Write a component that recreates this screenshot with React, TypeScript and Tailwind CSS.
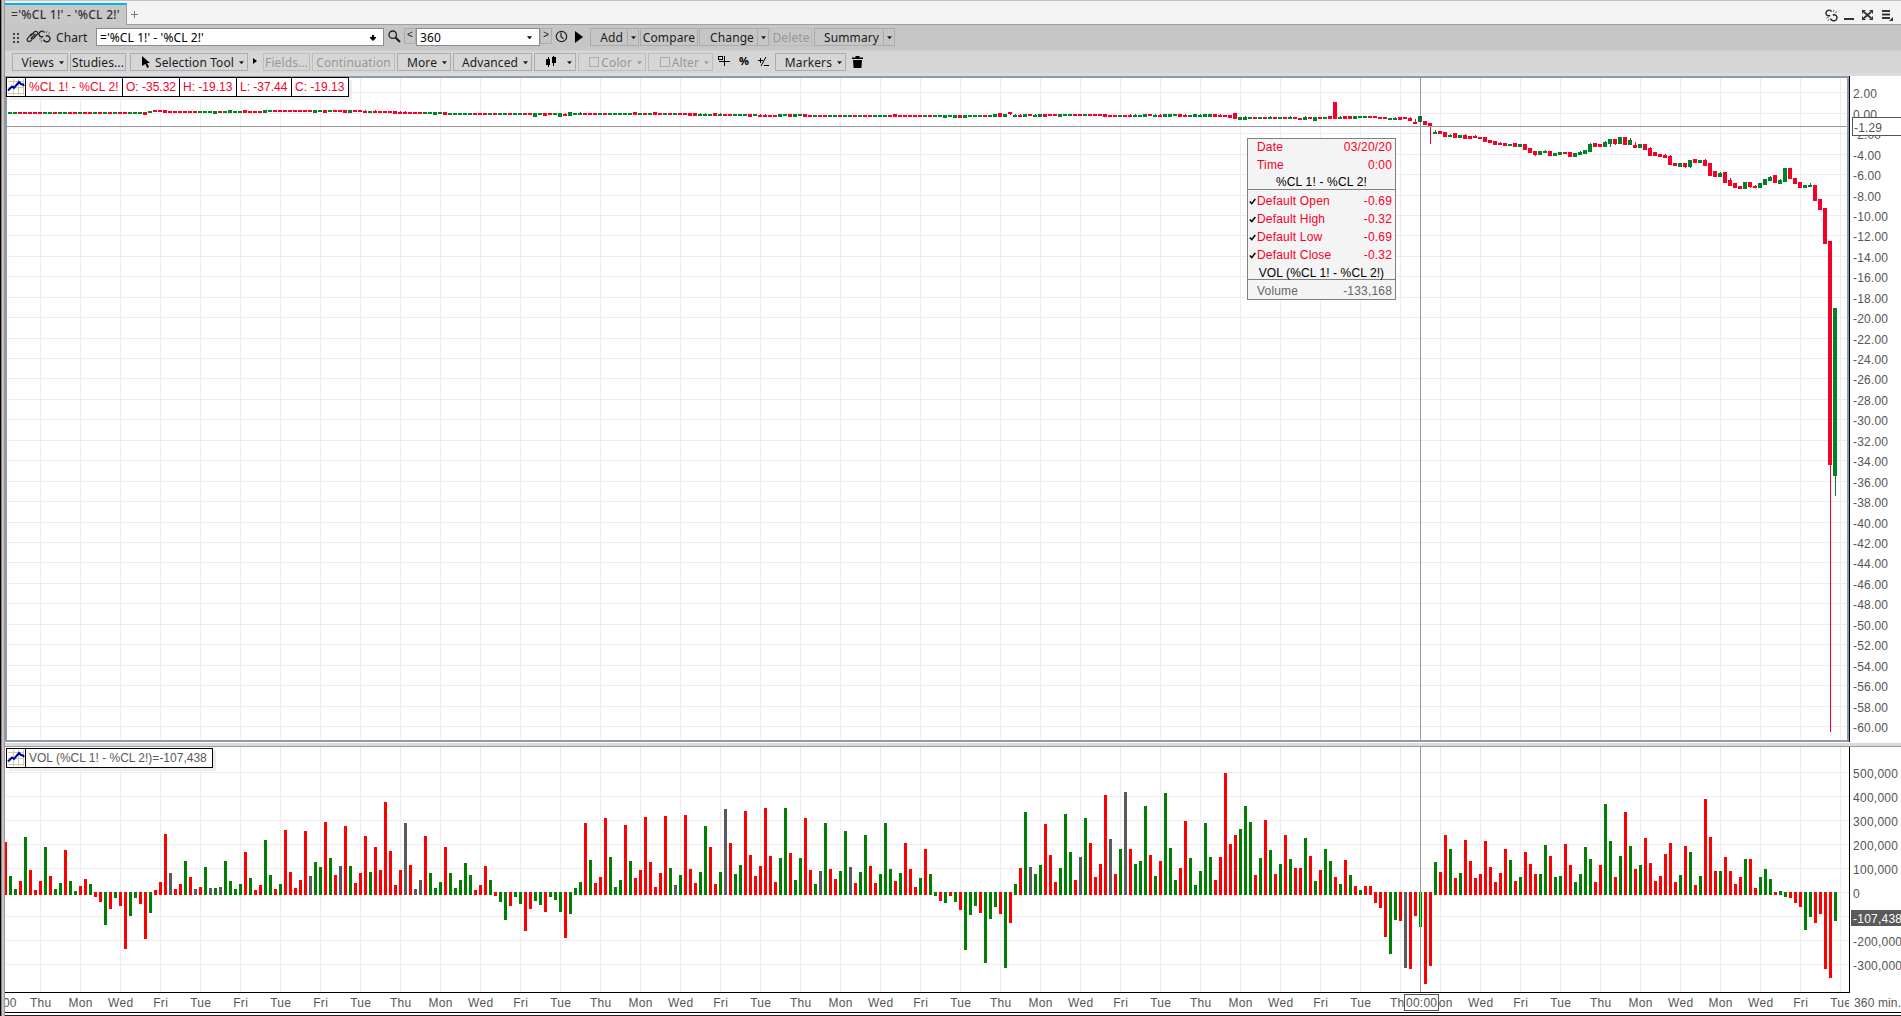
import React from "react";

type Tone = "R" | "G" | "K";

/* Volume histogram: tone + bar end, in thirds of a pixel from the panel origin. */
const VOLUME = `
R336 G438 G477 R453 G321 R420 R480 R453 G351 R438 G477 G459 R360 G453 G483 R468 R447 G462 R501 R516
G585 R537 G504 R528 R657 G558 G504 R522 R627 G549 R480 R456 R312 K429 R477 R462 G393 R441 K477 R471
G411 K474 G474 K471 G393 G453 G477 G462 R366 G444 R480 R465 G330 G435 R477 G462 R300 R426 R474 R450
R303 K438 G396 G411 R276 G384 R435 K408 R288 G408 R459 R429 R318 G426 R351 R420 R216 R363 R465 R420
K279 R405 K477 K450 R318 G429 G474 G456 R351 G429 G474 G450 G399 G435 R480 R465 R408 G450 R498 G516
G570 R528 G501 G522 R603 R537 G513 G525 R546 G501 G510 G546 R624 G552 G474 G456 R279 G390 R459 R441
R264 G381 G471 G450 R285 G393 R444 R420 R261 R396 R471 R429 R258 G414 K465 G435 R255 R417 R459 G426
G288 R351 R462 G426 K237 R339 G432 G405 R243 R375 R438 R408 R234 R378 R456 G384 G234 R369 G450 G384
R264 R420 G462 K423 G279 R417 R447 G423 G303 K411 R459 G426 G315 R408 R459 G432 G279 G417 R453 G429
R339 R417 R471 G444 R357 G432 G498 R513 G519 R498 G516 R540 G660 G555 G528 R549 G699 G567 G531 R552
G714 R579 G462 R414 G246 K411 G432 G405 R282 R375 R456 G414 G252 G366 R450 K381 G264 R339 R441 R402
R195 K327 R432 G357 K186 R357 G402 G393 G228 R375 G438 R393 G189 G354 G450 R414 R273 G384 G465 G423
G279 G381 R450 R381 R129 R342 R315 G297 G228 G276 R435 G384 R270 G360 R432 G402 R315 G387 R414 R414
G324 R378 G453 R420 G357 G393 R441 G462 R390 G435 R468 G480 R468 R468 R519 R534 R621 G672 G570 R573
K714 R717 R558 G591 R762 R708 G396 R426 R315 G357 R444 G429 R330 R393 R444 R432 R333 R411 R456 R429
R357 G390 R453 G441 R366 R402 R432 G432 G345 R378 G441 G438 R342 R405 G456 G432 G351 G387 R456 R405
G222 G333 R441 G378 R246 G348 R417 G405 R324 R399 R453 R438 R372 R339 R456 G435 R348 G366 R465 G438
R207 R321 R423 G423 R381 R423 R462 R441 G387 R387 R474 G441 G417 G447 R486 G483 G501 R504 R519 R531
G600 G561 R579 R552 R717 R744 G573`
  .trim()
  .split(/\s+/)
  .map((t) => ({ tone: t[0] as Tone, end: Number(t.slice(1)) / 3 }));

/* Quiet sessions: first index, body top (thirds of a pixel), tones. Every body is two pixels tall. */
const QUIET: [number, number, string][] = [
  [1, 66, "GGRRRRRGGRGGRRGRRGRGRGRRGGGR"],
  [29, 63, "G"],
  [30, 60, "RRR"],
  [33, 63, "RRRRRRGGGGRGGGGRRRRG"],
  [53, 60, "GRRRRRRRRGGRGRRRGRR"],
  [72, 63, "RGRRRRR"],
  [79, 66, "RRRRRGGGGR"],
  [89, 69, "GGGGGRRRGRGGRGGRRGGRRGG"],
  [112, 72, "R"],
  [113, 69, "GGGRRRGRGGGGGRGRGRRGRGRRRR"],
  [139, 72, "GGGRGRRGGGRG"],
  [151, 75, "RRRR"],
  [155, 72, "GGRGGR"],
  [161, 75, "RGRRGGRGGRGRRGGGRRRRRRRGRGGRGRGRGGGRGG"],
  [199, 72, "GRG"],
  [202, 66, "R"],
  [203, 75, "GRGRGGRRRGGGRRGRRRRRRGRRGGGRGRGGGRRGGGGGRRRRR"],
  [248, 81, "GGRGRGRGRGRRGRGRGGRGRR"],
  [270, 78, "GGRR"],
  [274, 81, "RRRGGRRR"],
];

type Candle = { tone: string; top: number; bottom: number; wick?: number };

/* Individual candles: index, tone, top, bottom, optional wick end. */
const DETAIL = `
28R66,75 32R60,69 42G63,72 45G60,69 48R60,69 52G60,69 62G60,69 64R60,69 68R60,69 69G60,69 72R63,69,60 74R63,69,60
78R63,72 79R66,72,63 80R66,72,63 86G66,75 88R66,75 106G69,81 108R69,78 111G69,81 112R72,78,69 113G66,78 115G69,75,66
126R66,75 130R66,75 137R69,78 138R69,78 139G72,78,69 140G72,78,69 142R69,78 143G72,78,69 149R72,81 151R75,81,72
152R75,81,72 155G72,81 157R72,81 158G72,81 160R72,81 178R72,81 188G75,84 190G75,84 191R75,84 192G75,84 198G72,81
199R69,81 200G72,81 201R66,72,75 202G75,81,72 203R75,81,72 204G72,81
205R72,78 206G75,81,72 207G72,81 208R72,81 209R72,78 210R72,78 211G72,81 212G72,78 213G72,78 214R72,78 215R72,78
216G72,78 217R72,78 218R72,78 219R72,78 220R72,81 221R75,81 222R75,81 223G75,81 224R75,81 225R75,81,72 226G75,81,72
227G75,81 228G72,81 229R72,78 230G75,81,72 231R75,81,72 232G72,81 233G72,81 234G72,78 235R72,81 236R75,81,72
237G75,81 238G72,81 239G75,81,72 240G72,81 241G72,81 242R72,81 243R75,81,72 244R75,81 245R75,84 246R69,87
247G81,90 248G81,90,78 253G81,87,78 257G81,87,78 259R84,90 260G81,90,78 262G81,93 265R78,87 266R36,87 267G81,87,78
268R78,87 269R78,87 270G78,87 271G78,84 272G78,84 273R78,84 274R78,84 275R81,87 276R81,87 277G84,90
278G84,90,81 279R81,90 280R81,87 281R84,93,81 282R96,102,87 283G78,96 284R93,105 285R99,110,162 286G126,132,120
287R123,132 288R126,141 289G135,141,132 290R129,144 291G135,144 292R135,147,132 293R138,147 294R138,144,135
295R141,147 296R141,156 297R150,159 298R153,165 299R159,165,156 300R159,168 301G162,168 302R159,171 303G162,171
304R162,180 305R174,189 306R183,195,198 307G183,195 308G183,189,180 309R183,198 310G189,198 311G186,195 312R186,192
313R186,201 314G189,201 315G186,195,183 316G180,192 317G162,186,159 318R159,171 319R162,171 320G156,171,153
321G147,162,171 322R147,162,165 323G141,162 324R141,165 325G150,165,144 326R165,174,156 327G162,174 328R162,180
329R174,198,171 330R186,198 331R192,201 332R195,204,192 333R198,225,195 334R219,228 335G219,231 336R219,231,234
337G210,231,234 338R207,219 339G210,219 340R210,228,207 341R219,258 342R243,261 343G249,261,246 344R246,279
345R270,288,264 346R279,294 347R288,297 348G276,297 349R276,291,294 350R288,294,285 351G279,294 352G267,285
353G261,273,258 354R255,279 355G270,282,267 356G234,276 357R234,267 358R264,282 359R276,294 360G285,294
361G285,291,279 362R285,333 363R327,360 364R354,462 365R453,1125,1926 366G654,1158,1218`;

const candles = new Map<number, Candle>();
QUIET.forEach(([start, top, tones]) =>
  tones.split("").forEach((tone, k) => candles.set(start + k, { tone, top, bottom: top + 6 }))
);
DETAIL.trim()
  .split(/\s+/)
  .forEach((t) => {
    const m = /^(\d+)([RG])([\d,]+)$/.exec(t)!;
    const [top, bottom, wick] = m[3].split(",").map(Number);
    candles.set(Number(m[1]), { tone: m[2], top, bottom, wick });
  });

const PRICE_GRID = [
  92, 113, 133, 154, 174, 195, 215, 235, 256, 276, 297, 317, 338, 358, 378, 399, 419, 440, 460, 481, 501, 522, 542,
  562, 583, 603, 624, 644, 665, 685, 706, 726,
];
const VOLUME_GRID = [772, 796, 820, 844, 868, 892, 916, 940, 964];
const VOLUME_LABELS = ["500,000", "400,000", "300,000", "200,000", "100,000", "0", "", "-200,000", "-300,000"];

/* Day names, one for each 40-pixel column. */
const DAY_COLUMNS =
  "Thu Mon Wed Fri Tue Fri Tue Fri Tue Thu Mon Wed Fri Tue Thu Mon Wed Fri Tue Thu Mon Wed Fri Tue Thu Mon Wed Fri Tue Thu Mon Wed Fri Tue Thu Mon Wed Fri Tue Thu Mon Wed Mon Wed Fri Tue".split(
    " "
  );

const FILL: Record<string, string> = { R: "#ff0000", G: "#008000", K: "#5a5a5a" };
const COLUMNS = Array.from({ length: 46 }, (_, k) => 40 * (k + 1));

function PriceChart() {
  return (
    <svg width="1840" height="662" viewBox="7 78 1840 662" shapeRendering="crispEdges" className="block">
      <rect x="7" y="78" width="1840" height="662" fill="#fff" />
      {COLUMNS.map((x) => (
        <rect key={x} x={x} y="78" width="1" height="662" fill="#ededed" />
      ))}
      {PRICE_GRID.map((y) => (
        <rect key={y} x="7" y={y} width="1840" height="1" fill="#ededed" />
      ))}
      {[...candles].map(([i, c]) => {
        const fill = c.tone === "R" ? "#f50028" : "#008228";
        const lo = c.wick === undefined ? c.top : Math.min(c.top, c.wick);
        const hi = c.wick === undefined ? c.bottom : Math.max(c.bottom, c.wick);
        return (
          <g key={i} fill={fill}>
            <rect x={3 + 5 * i} y={90 + c.top / 3} width="4" height={(c.bottom - c.top) / 3} />
            <rect x={5 + 5 * i} y={90 + lo / 3} width="1" height={(hi - lo) / 3} />
          </g>
        );
      })}
      <rect x="7" y="126" width="1840" height="1" fill="#999" />
      <rect x="1420" y="78" width="1" height="662" fill="#999" />
      <rect x="1420" y="116" width="1" height="6" fill="#5a2878" />
    </svg>
  );
}

function VolumeChart() {
  return (
    <svg width="1844" height="245" viewBox="5 747 1844 245" shapeRendering="crispEdges" className="block">
      {COLUMNS.map((x) => (
        <rect key={x} x={x} y="747" width="1" height="245" fill="#ededed" />
      ))}
      {VOLUME_GRID.map((y) => (
        <rect key={y} x="5" y={y} width="1844" height="1" fill="#ededed" />
      ))}
      <rect x="1420" y="747" width="1" height="245" fill="#999" />
      {VOLUME.map((v, i) => {
        const end = 730 + v.end;
        const up = end <= 892;
        return (
          <rect
            key={i}
            x={4 + 5 * i}
            y={up ? end : 892}
            width="3"
            height={up ? 895 - end : end - 892}
            fill={FILL[v.tone]}
          />
        );
      })}
      <rect x="1420" y="892" width="1" height="35" fill="#66e066" />
    </svg>
  );
}

const axisFont = "font-['Liberation_Sans',Arial,sans-serif] text-[12px]";

function PriceAxis() {
  return (
    <svg width="52" height="666" viewBox="1849 76 52 666" className={`block bg-white ${axisFont}`}>
      <rect x="1849" y="76" width="1" height="666" fill="#000" shapeRendering="crispEdges" />
      {PRICE_GRID.map((y, k) => {
        const label = (2 - 2 * k).toFixed(2);
        return (
          <text key={k} x="1853" y={y + 6} fill="#555" textLength={label.length * 7 - (label[0] === "-" ? 7 : 4)}>
            {label}
          </text>
        );
      })}
      <rect x="1852.5" y="117.5" width="60" height="18" fill="#fff" stroke="#555" />
      <text x="1854" y="132" fill="#555" textLength="28">-1.29</text>
    </svg>
  );
}

function VolumeAxis() {
  return (
    <svg width="52" height="246" viewBox="1849 747 52 246" className={`block bg-white ${axisFont}`}>
      <rect x="1849" y="747" width="1" height="246" fill="#000" shapeRendering="crispEdges" />
      {VOLUME_LABELS.map((t, k) => (
        <text key={k} x="1853" y={VOLUME_GRID[k] + 6} fill="#555" textLength={t.length > 7 ? 49 : t.length > 1 ? 45 : 7}>
          {t}
        </text>
      ))}
      <rect x="1851" y="910" width="50" height="16" fill="#5a5a5a" />
      <text x="1853" y="923" fill="#fff" textLength="49">-107,438</text>
    </svg>
  );
}

function TimeAxis() {
  return (
    <svg width="1896" height="19" viewBox="5 993 1896 19" className={`block bg-white ${axisFont}`}>
      <svg x="5" y="993" width="1844" height="19" viewBox="5 993 1844 19">
        <text x="3" y="1007" fill="#555">00</text>
        {DAY_COLUMNS.map((d, k) => (
          <text key={k} x={40 * (k + 1) + 0.7} y="1007" fill="#555" textAnchor="middle" letterSpacing="0.3">
            {d}
          </text>
        ))}
        <rect x="1404.5" y="994.5" width="34" height="16" fill="#fff" stroke="#555" />
        <text x="1406" y="1007" fill="#555" textLength="31">00:00</text>
      </svg>
      <text x="1854" y="1007" fill="#555" textLength="47">360 min.</text>
    </svg>
  );
}

function Caret({ small }: { small?: boolean }) {
  return (
    <svg width={small ? 5 : 6} height="4" viewBox="0 0 6 4" className="shrink-0">
      <path d="M0 0h6L3 3.6z" fill="currentColor" />
    </svg>
  );
}

function Btn({ className, children, dim }: { className: string; children?: React.ReactNode; dim?: boolean }) {
  return (
    <div
      className={`flex h-[18px] shrink-0 items-center overflow-hidden border pt-[2px] whitespace-nowrap ${
        dim ? "border-[#bdbdbd] text-[#989898]" : "border-[#acacac] text-[#1c1c1c]"
      } ${className}`}
    >
      {children}
    </div>
  );
}

function BrokenLink({ className }: { className: string }) {
  return (
    <svg width="13" height="13" viewBox="0 0 13 13" fill="none" stroke="#222" strokeWidth="1.4" className={className}>
      <path d="M6.500 2.600C5.600.800 3.400.600 2 2S.600 5 2 6.200c.8.700 2.200.6 3.200.1M5.500 9.600c.8 1.800 3.400 3 5.300 1.600 1.600-1.300 1.600-3.400.2-4.700-.9-.8-2.300-.9-3.300-.2" />
      <path d="M8.500 3.200L8.900.800M10 4.200l2.200-2M3.800 8.400L1.200 9M4 10l-1.200 2.200" strokeWidth=".9" stroke="#666" />
    </svg>
  );
}

function Legend({ cells, tone }: { cells: [string, string][]; tone: string }) {
  return (
    <div
      className={`flex h-5 w-fit border border-black bg-white font-['Liberation_Sans',Arial,sans-serif] text-[12px] leading-[18px] shadow-[3px_3px_0_#ededed] ${tone}`}
    >
      <svg width="18" height="18" viewBox="0 0 18 18" className="shrink-0">
        <path d="M1 3.5h16M1 9.5h16M1 15.5h16M6.500 1v16M11.500 1v16M16.500 1v16" stroke="#cdcdaa" fill="none" shapeRendering="crispEdges" />
        <path d="M1 12.500l4-4 2 1.500L12 4l2 2 2 .5 1 1.500" stroke="#0000aa" strokeWidth="2" fill="none" />
      </svg>
      {cells.map(([text, width]) => (
        <div key={text} className={`border-l border-black pl-[3px] whitespace-nowrap ${width}`}>
          {text}
        </div>
      ))}
    </div>
  );
}

function TipRow({ name, value, check }: { name: string; value: string; check?: boolean }) {
  return (
    <div className="flex h-[18px] items-center pr-[3px]">
      <div className="w-[9px] shrink-0">
        {check && (
          <svg width="7" height="7" viewBox="0 0 7 7" className="ml-px mt-px">
            <path d="M.8 3.4l2 2.200L6.300 1" stroke="#000" strokeWidth="1.500" fill="none" />
          </svg>
        )}
      </div>
      <span>{name}</span>
      <span className="ml-auto">{value}</span>
    </div>
  );
}

function Tooltip() {
  return (
    <div className="absolute left-[1240px] top-[60px] h-[162px] w-[149px] border border-[#808080] bg-[#f4f4f4] font-['Liberation_Sans',Arial,sans-serif] text-[12px] leading-[18px] tracking-[0.18px] text-[#f50028]">
      <div className="-mt-px">
        <TipRow name="Date" value="03/20/20" />
        <TipRow name="Time" value="0:00" />
      </div>
      <div className="h-[16px] border-b border-[#808080] text-center leading-[17px] text-black">%CL 1! - %CL 2!</div>
      <div className="h-[2px]" />
      <TipRow check name="Default Open" value="-0.69" />
      <TipRow check name="Default High" value="-0.32" />
      <TipRow check name="Default Low" value="-0.69" />
      <TipRow check name="Default Close" value="-0.32" />
      <div className="h-[16px] border-b border-[#808080] text-center leading-[18px] tracking-[0.1px] text-black">
        VOL (%CL 1! - %CL 2!)
      </div>
      <div className="h-[2px]" />
      <div className="text-[#666]">
        <TipRow name="Volume" value="-133,168" />
      </div>
    </div>
  );
}

function TabBar() {
  return (
    <div className="flex h-[25px] border-t border-[#c4c4c4] bg-[#f3f3f3]">
      <div className="mt-[2px] flex h-[22px] w-[122px] shrink-0 border-t-2 border-r border-t-[#00b4e6] border-r-[#a0a0a0] bg-[#c8c8c8] pl-[6px] text-[12px] leading-[19px] font-medium tracking-[0.28px] text-[#333]">
        ='%CL 1!' - '%CL 2!'
      </div>
      <div className="flex grow items-center border-b border-[#a0a0a0]">
        <svg width="7" height="7" viewBox="0 0 7 7" className="ml-1 mt-[3px]">
          <path d="M3.500 0v7M0 3.500h7" stroke="#777" />
        </svg>
        <BrokenLink className="mt-[5px] ml-auto" />
        <div className="mt-[13px] ml-[6px] h-[2px] w-[10px] bg-[#333]" />
        <svg width="11" height="10" viewBox="0 0 11 10" className="mt-[5px] ml-[8px]" stroke="#333" fill="#333">
          <path d="M2 2l7 6M9 2L2 8" strokeWidth="1.800" />
          <path d="M0 0h4L0 4zM11 0v4L7 0zM0 10V6l4 4zM11 10H7l4-4z" stroke="none" />
        </svg>
        <svg width="11" height="11" viewBox="0 0 11 11" className="mt-[6px] mr-[8px] ml-[9px]" fill="#333">
          <path d="M0 0h8v2H0zM0 3.500h8v2H0zM0 7h8v2H0zM11 7v4H7z" />
        </svg>
      </div>
    </div>
  );
}

function MainToolbar() {
  return (
    <div className="flex h-[25px] bg-[#c6c6c6] pt-[3px] text-[12px] leading-[16px] tracking-[0.1px] text-[#1c1c1c]">
      <svg width="6" height="10" viewBox="0 0 6 10" className="mt-[5px] ml-[8px]" fill="#444">
        <path d="M0 0h2v2H0zM4 0h2v2H4zM0 4h2v2H0zM4 4h2v2H4zM0 8h2v2H0zM4 8h2v2H4z" />
      </svg>
      <svg width="13" height="13" viewBox="0 0 13 13" className="mt-[2px] ml-[7px]" fill="none" stroke="#222" strokeWidth="1.200">
        <path d="M5 8.500L9.500 4M4.500 6L8 2.200C9.500.600 12.500 1.500 11.500 4L8 8c-1.200 1.200-2.600.8-3 .2M8 4C7 3.200 5.600 3.600 5 4.500L1.500 8.500c-1.200 2 1 4 3 2.500L6 9.500" />
      </svg>
      <BrokenLink className="mt-[2px] -ml-px" />
      <div className="ml-[5px] w-[40px] shrink-0 leading-[20px]">Chart</div>
      <div className="flex h-[18px] w-[288px] shrink-0 items-center justify-between border border-[#8c8c8c] bg-white pt-px pr-[7px] pl-[3px] text-black">
        <span>='%CL 1!' - '%CL 2!'</span>
        <svg width="6" height="6" viewBox="0 0 6 6">
          <path d="M2 0h2v2h2v1L3 6 0 3V2h2z" />
        </svg>
      </div>
      <svg width="13" height="13" viewBox="0 0 13 13" className="mt-[2px] ml-[4px]" fill="none" stroke="#222">
        <circle cx="4.700" cy="4.700" r="3.700" strokeWidth="1.300" />
        <path d="M7.500 7.500l4.500 4.500" strokeWidth="2.200" />
      </svg>
      <div className="ml-[3px] h-[16px] w-[12px] shrink-0 border border-[#acacac] text-center font-['Liberation_Mono',monospace] text-[10px] leading-[13px]">
        &lt;
      </div>
      <div className="flex h-[18px] w-[124px] shrink-0 items-center justify-between border border-[#8c8c8c] bg-white pt-px pr-[7px] pl-[3px] text-black">
        <span>360</span>
        <Caret small />
      </div>
      <div className="h-[16px] w-[12px] shrink-0 border border-[#acacac] text-center font-['Liberation_Mono',monospace] text-[10px] leading-[13px]">
        &gt;
      </div>
      <svg width="13" height="13" viewBox="0 0 13 13" className="mt-[2px] ml-[3px]" fill="none" stroke="#222" strokeWidth="1.200">
        <circle cx="6.500" cy="6.500" r="5.200" />
        <path d="M6 2.500v4.300l2.500 2" />
      </svg>
      <svg width="8" height="12" viewBox="0 0 8 12" className="mt-[3px] ml-[7px]">
        <path d="M0 0l8 6-8 6z" />
      </svg>
      <Btn className="ml-[7px] w-[38px] justify-end pr-[4px]">Add</Btn>
      <Btn className="-ml-px w-[12px] justify-center"><Caret small /></Btn>
      <Btn className="ml-px w-[58px] justify-center">Compare</Btn>
      <Btn className="ml-px w-[59px] justify-end pr-[3px]">Change</Btn>
      <Btn className="-ml-px w-[12px] justify-center"><Caret small /></Btn>
      <Btn dim className="ml-px w-[42px] justify-center">Delete</Btn>
      <Btn className="ml-[2px] w-[70px] justify-end pr-[4px]">Summary</Btn>
      <Btn className="-ml-px w-[12px] justify-center"><Caret small /></Btn>
    </div>
  );
}

function ChartToolbar() {
  return (
    <div className="flex h-[26px] bg-[#d6d6d6] pt-[3px] text-[12px] leading-[16px] tracking-[0.1px] shadow-[inset_0_1px_0_#cfcfcf,inset_0_-3px_0_#dcdcdc]">
      <Btn className="ml-[7px] w-[56px] justify-end gap-[5px] pr-[3px]">Views <Caret small /></Btn>
      <Btn className="ml-[2px] w-[56px] justify-center">Studies...</Btn>
      <Btn className="ml-[4px] w-[118px] justify-end gap-[5px] pr-[3px]">
        <svg width="8" height="12" viewBox="0 0 8 12" className="mb-[3px]">
          <path d="M0 0l8 7H5l2 4-1.800 1L3.400 8 0 10z" fill="#000" />
        </svg>
        Selection Tool <Caret small />
      </Btn>
      <svg width="4" height="6" viewBox="0 0 4 6" className="mt-[5px] ml-[5px]">
        <path d="M0 0l4 3-4 3z" />
      </svg>
      <Btn dim className="ml-[6px] w-[47px] justify-center">Fields...</Btn>
      <Btn dim className="ml-[2px] w-[83px] justify-center">Continuation</Btn>
      <Btn className="ml-[2px] w-[54px] justify-end gap-[5px] pr-[3px]">More <Caret small /></Btn>
      <Btn className="ml-[2px] w-[79px] justify-end gap-[5px] pr-[3px]">Advanced <Caret small /></Btn>
      <Btn className="ml-[2px] w-[42px] justify-end gap-[11px] pr-[3px]">
        <svg width="10" height="11" viewBox="0 0 10 11" className="mb-[3px]" shapeRendering="crispEdges">
          <path d="M0 3h4v6H0zM2 1h1v10H2zM6 1h4v6H6zM7 0h1v10H7z" fill="#000" />
        </svg>
        <Caret small />
      </Btn>
      <Btn dim className="ml-[2px] w-[68px] justify-end pr-[3px]">
        <div className="mr-[2px] mb-[2px] size-[10px] border border-[#aaa]" />
        Color
        <span className="ml-[5px] flex"><Caret small /></span>
      </Btn>
      <Btn dim className="ml-[2px] w-[65px] justify-end pr-[3px]">
        <div className="mr-[2px] mb-[2px] size-[10px] border border-[#aaa]" />
        Alter
        <span className="ml-[5px] flex"><Caret small /></span>
      </Btn>
      <svg width="12" height="12" viewBox="0 0 12 12" className="mt-[2px] ml-[5px]" shapeRendering="crispEdges">
        <path d="M.5 1.500h4v3h-4zM6.500 1v10M1 6.500h11" stroke="#000" fill="none" />
      </svg>
      <div className="ml-[9px] w-[10px] shrink-0 text-center text-[11px] leading-[16px] font-bold text-black">%</div>
      <svg width="11" height="10" viewBox="0 0 11 10" className="mt-[4px] ml-[9px]" stroke="#000" fill="none">
        <path d="M2.500 1v5M0 3.500h5M8 0L3 9M6 8.500h5" />
      </svg>
      <Btn className="ml-[6px] w-[71px] justify-end gap-[5px] pr-[3px]">Markers <Caret small /></Btn>
      <svg width="11" height="12" viewBox="0 0 11 12" className="mt-[3px] ml-[6px]">
        <path d="M0 1.500h3.500V0h4v1.500H11V3H0zM1 4h9l-.6 8H1.600z" />
      </svg>
    </div>
  );
}

export default function App() {
  return (
    <div className="flex h-[1016px] w-[1901px] overflow-hidden bg-white font-['Noto_Sans',sans-serif]">
      <div className="flex w-[5px] shrink-0">
        <div className="w-px bg-black" />
        <div className="w-px bg-[#8c8484]" />
        <div className="w-[2px] bg-[#c8c2c4]" />
        <div className="w-px bg-[#999]" />
      </div>
      <div className="flex w-[1896px] flex-col">
        <TabBar />
        <MainToolbar />
        <ChartToolbar />
        <div className="flex h-[666px]">
          <div className="relative h-[666px] w-[1844px] border-2 border-[#8c9ab0] bg-white">
            <PriceChart />
            <div className="absolute -top-px -left-px">
              <Legend
                tone="text-[#f50028]"
                cells={[
                  ["%CL 1! - %CL 2!", "w-[97px] tracking-[0.08px]"],
                  ["O: -35.32", "w-[57px]"],
                  ["H: -19.13", "w-[57px]"],
                  ["L: -37.44", "w-[55px]"],
                  ["C: -19.13", "w-[57px]"],
                ]}
              />
            </div>
            <Tooltip />
          </div>
          <PriceAxis />
        </div>
        <div className="mt-px h-[4px] border-b border-[#999] bg-[#dadada]" />
        <div className="flex h-[246px]">
          <div className="relative w-[1844px] border-b border-black">
            <VolumeChart />
            <div className="absolute top-px left-px">
              <Legend tone="text-[#5a5a5a]" cells={[["VOL (%CL 1! - %CL 2!)=-107,438", "w-[187px]"]]} />
            </div>
          </div>
          <VolumeAxis />
        </div>
        <TimeAxis />
        <div className="h-px bg-black" />
        <div className="mt-[2px] h-px bg-[#2a2424]" />
      </div>
    </div>
  );
}
